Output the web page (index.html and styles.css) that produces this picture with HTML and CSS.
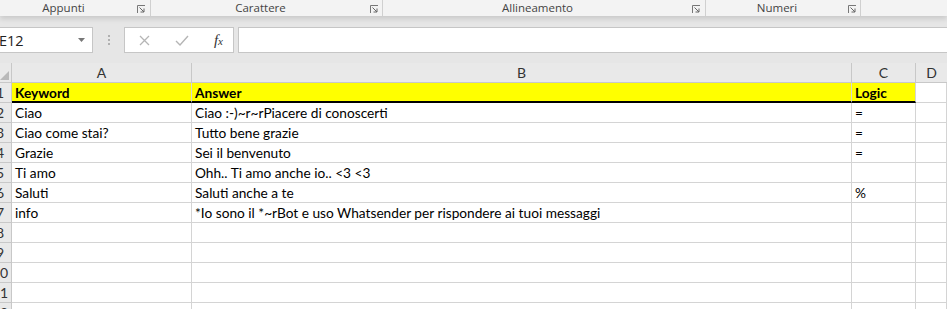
FILE: index.html
```html
<!DOCTYPE html>
<html lang="it">
<head>
    <meta charset="UTF-8">
    <title>Foglio risposte</title>
    <link rel="stylesheet" href="styles.css">
</head>
<body>

    <div class="ribbon">
        <div class="group g-appunti"><span class="group-label">Appunti</span><span class="launcher"><svg width="9" height="9" viewBox="0 0 9 9"><path d="M0.5 8V0.5H8" fill="none" stroke="#777"/><path d="M2.5 2.5L7 7M7 3.5V7H3.5" fill="none" stroke="#666"/></svg></span></div>
        <div class="group g-carattere"><span class="group-label">Carattere</span><span class="launcher"><svg width="9" height="9" viewBox="0 0 9 9"><path d="M0.5 8V0.5H8" fill="none" stroke="#777"/><path d="M2.5 2.5L7 7M7 3.5V7H3.5" fill="none" stroke="#666"/></svg></span></div>
        <div class="group g-allineamento"><span class="group-label">Allineamento</span><span class="launcher"><svg width="9" height="9" viewBox="0 0 9 9"><path d="M0.5 8V0.5H8" fill="none" stroke="#777"/><path d="M2.5 2.5L7 7M7 3.5V7H3.5" fill="none" stroke="#666"/></svg></span></div>
        <div class="group g-numeri"><span class="group-label">Numeri</span><span class="launcher"><svg width="9" height="9" viewBox="0 0 9 9"><path d="M0.5 8V0.5H8" fill="none" stroke="#777"/><path d="M2.5 2.5L7 7M7 3.5V7H3.5" fill="none" stroke="#666"/></svg></span></div>
        <div class="group g-rest"></div>
    </div>

    <div class="formula-bar">
        <div class="name-box">
            <span>E12</span>
            <svg class="drop" width="7" height="4" viewBox="0 0 7 4"><path d="M0 0H7L3.5 4Z" fill="#777"/></svg>
        </div>
        <div class="grip"><i></i><i></i><i></i></div>
        <div class="fx-buttons">
            <svg width="11" height="11" viewBox="0 0 11 11"><path d="M1 1L10 10M10 1L1 10" stroke="#b5b5b5" stroke-width="1.3"/></svg>
            <svg width="14" height="11" viewBox="0 0 14 11"><path d="M1 6L5 10L13 1" fill="none" stroke="#b5b5b5" stroke-width="1.4"/></svg>
            <span class="fx">f<sub>x</sub></span>
        </div>
        <div class="formula-input"></div>
    </div>

    <div class="sheet">
        <div class="corner"><svg width="9" height="9" viewBox="0 0 9 9"><path d="M9 0V9H0Z" fill="#b9b9b9"/></svg></div>
        <div class="col-head">A</div>
        <div class="col-head">B</div>
        <div class="col-head">C</div>
        <div class="col-head last">D</div>

        <div class="row-head"><span>1</span></div>
        <div class="cell title">Keyword</div>
        <div class="cell title">Answer</div>
        <div class="cell title">Logic</div>
        <div class="cell"></div>

        <div class="row-head"><span>2</span></div>
        <div class="cell">Ciao</div>
        <div class="cell">Ciao :-)~r~rPiacere di conoscerti</div>
        <div class="cell">=</div>
        <div class="cell"></div>

        <div class="row-head"><span>3</span></div>
        <div class="cell">Ciao come stai?</div>
        <div class="cell">Tutto bene grazie</div>
        <div class="cell">=</div>
        <div class="cell"></div>

        <div class="row-head"><span>4</span></div>
        <div class="cell">Grazie</div>
        <div class="cell">Sei il benvenuto</div>
        <div class="cell">=</div>
        <div class="cell"></div>

        <div class="row-head"><span>5</span></div>
        <div class="cell">Ti amo</div>
        <div class="cell">Ohh.. Ti amo anche io.. &lt;3 &lt;3</div>
        <div class="cell"></div>
        <div class="cell"></div>

        <div class="row-head"><span>6</span></div>
        <div class="cell">Saluti</div>
        <div class="cell">Saluti anche a te</div>
        <div class="cell">%</div>
        <div class="cell"></div>

        <div class="row-head"><span>7</span></div>
        <div class="cell">info</div>
        <div class="cell">*Io sono il *~rBot e uso Whatsender per rispondere ai tuoi messaggi</div>
        <div class="cell"></div>
        <div class="cell"></div>

        <div class="row-head"><span>8</span></div>
        <div class="cell"></div><div class="cell"></div><div class="cell"></div><div class="cell"></div>

        <div class="row-head"><span>9</span></div>
        <div class="cell"></div><div class="cell"></div><div class="cell"></div><div class="cell"></div>

        <div class="row-head"><span>10</span></div>
        <div class="cell"></div><div class="cell"></div><div class="cell"></div><div class="cell"></div>

        <div class="row-head"><span>11</span></div>
        <div class="cell"></div><div class="cell"></div><div class="cell"></div><div class="cell"></div>

        <div class="row-head"><span>12</span></div>
        <div class="cell"></div><div class="cell"></div><div class="cell"></div><div class="cell"></div>
    </div>

</body>
</html>
```

FILE: styles.css
```css
body {
    margin: 0;
    background: #e6e6e6;
    font-family: "Open Sans", "Noto Sans", sans-serif;
    overflow: hidden;
}

/* ribbon group labels */
.ribbon {
    display: flex;
    height: 16px;
    background: #f3f3f3;
    box-shadow: 0 3px 5px rgba(0, 0, 0, 0.12);
    position: relative;
}
.group {
    display: flex;
    align-items: center;
    border-right: 1px solid #d0d0d0;
    box-sizing: border-box;
    height: 16px;
}
.g-appunti { width: 151px; padding-right: 4px; }
.g-carattere { width: 232px; padding-right: 3px; }
.g-allineamento { width: 323px; padding-right: 4px; }
.g-numeri { width: 155px; padding-right: 3px; }
.g-rest { flex: 1; border-right: none; }
.g-appunti .group-label { padding-right: 10px; }
.group-label {
    flex: 1;
    text-align: center;
    font-size: 11.5px;
    color: #444;
    line-height: 16px;
    margin-top: -1px;
}
.launcher {
    display: flex;
    width: 9px;
    height: 9px;
    margin-top: 3px;
}

/* formula bar */
.formula-bar {
    display: flex;
    align-items: center;
    height: 26px;
    margin-top: 11px;
}
.name-box {
    display: flex;
    align-items: center;
    justify-content: space-between;
    width: 93px;
    height: 26px;
    box-sizing: border-box;
    background: #fff;
    border: 1px solid #c6c6c6;
    border-left: none;
    padding-right: 7px;
    font-size: 14.5px;
    color: #222;
}
.name-box span {
    margin-left: -1px;
}
.grip {
    display: flex;
    flex-direction: column;
    gap: 2px;
    width: 31px;
    align-items: center;
}
.grip i {
    display: block;
    width: 2px;
    height: 2px;
    background: #b0b0b0;
}
.fx-buttons {
    display: flex;
    align-items: center;
    justify-content: space-between;
    width: 110px;
    height: 26px;
    box-sizing: border-box;
    background: #fff;
    border: 1px solid #c6c6c6;
    padding: 0 10px 0 14px;
}
.fx {
    font-family: "Liberation Serif", serif;
    font-style: italic;
    font-size: 15px;
    color: #333;
}
.fx sub {
    font-size: 11px;
    vertical-align: 0;
}
.formula-input {
    flex: 1;
    height: 26px;
    margin-left: 4px;
    box-sizing: border-box;
    background: #fff;
    border: 1px solid #c6c6c6;
    border-right: none;
}

/* worksheet */
.sheet {
    display: grid;
    grid-template-columns: 12px 180px 660px 64px 1fr;
    grid-auto-rows: 20px;
    margin-top: 10px;
    background: #fff;
}
.corner, .col-head, .row-head {
    background: #e9e9e9;
    box-sizing: border-box;
    border-right: 1px solid #c8c8c8;
    border-bottom: 1px solid #c8c8c8;
    color: #333;
    font-family: "Lato", sans-serif;
    font-size: 14px;
}
.corner {
    display: flex;
    align-items: flex-end;
    justify-content: flex-end;
    padding: 0 2px 2px 0;
}
.col-head {
    display: flex;
    align-items: center;
    justify-content: center;
}
.col-head.last {
    border-right: none;
}
.row-head {
    overflow: hidden;
    line-height: 19px;
}
.row-head span {
    display: block;
    width: 24px;
    margin-left: -12px;
    text-align: center;
}
.cell {
    box-sizing: border-box;
    border-right: 1px solid #d4d4d4;
    border-bottom: 1px solid #d4d4d4;
    padding: 0 3px;
    font-family: "Lato", sans-serif;
    font-size: 13.7px;
    line-height: 20px;
    color: #000;
    white-space: nowrap;
}
.cell.title {
    background: #ffff00;
    font-weight: bold;
    border-bottom: 2px solid #000;
}
```
